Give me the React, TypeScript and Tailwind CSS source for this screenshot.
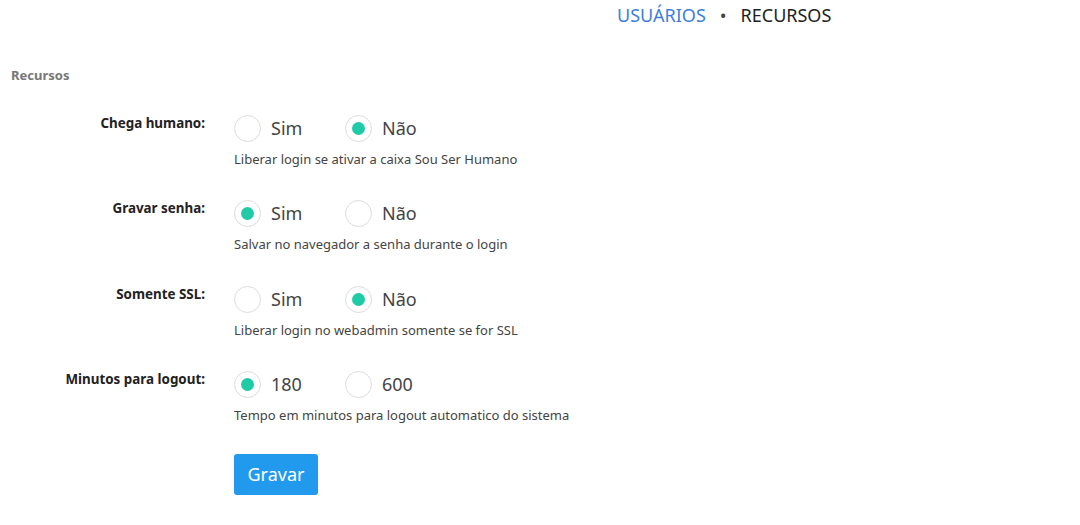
import React, { useState } from 'react';

type Option = { value: string; label: string };

type Field = {
  name: string;
  label: string;
  help: string;
  options: Option[];
  initial: string;
};

const fields: Field[] = [
  {
    name: 'humano',
    label: 'Chega humano:',
    help: 'Liberar login se ativar a caixa Sou Ser Humano',
    options: [
      { value: 'sim', label: 'Sim' },
      { value: 'nao', label: 'Não' },
    ],
    initial: 'nao',
  },
  {
    name: 'senha',
    label: 'Gravar senha:',
    help: 'Salvar no navegador a senha durante o login',
    options: [
      { value: 'sim', label: 'Sim' },
      { value: 'nao', label: 'Não' },
    ],
    initial: 'sim',
  },
  {
    name: 'ssl',
    label: 'Somente SSL:',
    help: 'Liberar login no webadmin somente se for SSL',
    options: [
      { value: 'sim', label: 'Sim' },
      { value: 'nao', label: 'Não' },
    ],
    initial: 'nao',
  },
  {
    name: 'logout',
    label: 'Minutos para logout:',
    help: 'Tempo em minutos para logout automatico do sistema',
    options: [
      { value: '180', label: '180' },
      { value: '600', label: '600' },
    ],
    initial: '180',
  },
];

const Radio = ({ checked, label, onClick }: { checked: boolean; label: string; onClick: () => void }) => (
  <button type="button" className="flex items-center w-[111px] text-left" onClick={onClick}>
    <span className="flex items-center justify-center w-[27px] h-[27px] rounded-full border border-[#dcdcdc] bg-white">
      {checked && <span className="w-[13px] h-[13px] rounded-full bg-[#1fcaa7]" />}
    </span>
    <span className="ml-[10px] text-[18px] text-[#444]">{label}</span>
  </button>
);

const FieldRow = ({ field }: { field: Field }) => {
  const [value, setValue] = useState(field.initial);

  return (
    <div className="flex">
      <div className="w-[206px] -mt-[2px] pr-[1px] text-right text-[13.4px] font-bold text-[#222]">{field.label}</div>
      <div className="ml-[28px]">
        <div className="flex">
          {field.options.map((opt) => (
            <Radio
              key={opt.value}
              label={opt.label}
              checked={value === opt.value}
              onClick={() => setValue(opt.value)}
            />
          ))}
        </div>
        <div className="mt-[8px] text-[13px] text-[#444]">{field.help}</div>
      </div>
    </div>
  );
};

const App = () => {
  const [tab, setTab] = useState(1);

  return (
    <div className="w-[1080px] h-[525px] bg-white font-['Noto_Sans','Open_Sans',sans-serif]">
      <div className="flex items-center pl-[617px] pt-[2px] text-[18px]">
        <button
          type="button"
          className={tab === 0 ? 'text-[#222]' : 'text-[#3c7fdc]'}
          onClick={() => setTab(0)}>
          USUÁRIOS
        </button>
        <span className="ml-[14px] mr-[14px] text-[#444] text-[18px]">•</span>
        <button
          type="button"
          className={tab === 1 ? 'text-[#222]' : 'text-[#3c7fdc]'}
          onClick={() => setTab(1)}>
          RECURSOS
        </button>
      </div>

      <div className="pl-[11px] mt-[37px] text-[13px] font-bold text-[#777]">Recursos</div>

      <div className="mt-[29px] flex flex-col gap-[31px]">
        {fields.map((f) => (
          <FieldRow field={f} key={f.name} />
        ))}
      </div>

      <button
        type="button"
        className="ml-[234px] mt-[28px] h-[41px] w-[84px] rounded-[3px] bg-[#2199ed] text-[18px] text-white">
        Gravar
      </button>
    </div>
  );
};

export default App;
